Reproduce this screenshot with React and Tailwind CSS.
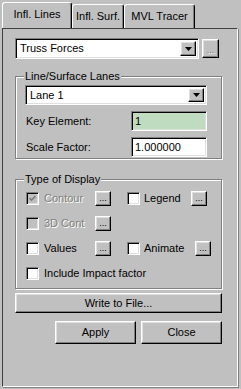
import React from "react";

const raised =
  "border border-t-white border-l-white border-r-black border-b-black shadow-[inset_-1px_-1px_0_#808080,inset_1px_1px_0_#dfdfdf] bg-[#c0c0c0]";
const sunken =
  "border border-t-[#808080] border-l-[#808080] border-r-white border-b-white shadow-[inset_1px_1px_0_#000,inset_-1px_-1px_0_#dfdfdf]";
const etched =
  "border border-[#808080] shadow-[inset_1px_1px_0_#fff,1px_1px_0_#fff]";

function Arrow() {
  return (
    <svg width="7" height="4" viewBox="0 0 7 4">
      <path d="M0 0H7L3.5 4Z" fill="#000" />
    </svg>
  );
}

function Combo({ text, w, h }) {
  return (
    <div className={`${sunken} bg-white flex items-center ${w} ${h} p-[2px]`}>
      <span className="flex-1 pl-[2px] leading-none">{text}</span>
      <div className={`${raised} w-[16px] h-full flex items-center justify-center`}>
        <Arrow />
      </div>
    </div>
  );
}

function Dots({ w = "w-[16px]", h = "h-[15px]", disabled = false }) {
  return (
    <div
      className={`${raised} ${w} ${h} flex items-end justify-center pb-[2px] leading-none text-[9px] ${
        disabled ? "text-[#808080] [text-shadow:1px_1px_0_#fff]" : "text-black"
      }`}
    >
      ...
    </div>
  );
}

function Check({ checked = false, disabled = false }) {
  return (
    <div
      className={`${sunken} w-[13px] h-[13px] shrink-0 flex items-center justify-center ${
        disabled ? "bg-[#c0c0c0]" : "bg-white"
      }`}
    >
      {checked && (
        <svg width="7" height="7" viewBox="0 0 7 7">
          <path d="M0.5 3L2.5 5L6.5 1" stroke={disabled ? "#808080" : "#000"} strokeWidth="1.6" fill="none" />
        </svg>
      )}
    </div>
  );
}

function Tab({ label, active, w }) {
  return (
    <div
      className={`${w} ${
        active ? "h-[26px] relative z-10" : "h-[24px]"
      } border-t border-l border-t-white border-l-white border-r border-r-black shadow-[inset_-1px_0_0_#808080] rounded-t-[3px] flex items-center justify-center bg-[#c0c0c0]`}
    >
      <span className={active ? "pb-[2px]" : ""}>{label}</span>
    </div>
  );
}

export default function App() {
  return (
    <div className="w-[241px] h-[389px] bg-[#c0c0c0] overflow-hidden font-['Liberation_Sans',Arial,sans-serif] text-[11px] text-black">
      <div className="h-[28px] flex items-end pl-[2px]">
        <Tab label="Infl. Lines" active w="w-[70px]" />
        <Tab label="Infl. Surf." w="w-[52px]" />
        <Tab label="MVL Tracer" w="w-[71px]" />
      </div>
      <div className="ml-[2px] w-[236px] h-[359px] border-t border-l border-t-[#404040] border-l-[#404040] border-r border-b border-r-white border-b-white shadow-[inset_1px_1px_0_#c0c0c0,1px_1px_0_#808080] flex flex-col pl-[12px]">
        <div className="mt-[9px] flex items-center">
          <Combo text="Truss Forces" w="w-[184px]" h="h-[21px]" />
          <div className="ml-[3px]">
            <Dots w="w-[17px]" h="h-[19px]" disabled />
          </div>
        </div>

        <fieldset className={`${etched} mt-[11px] w-[207px] p-0 m-0`}>
          <legend className="ml-[8px] px-[1px] bg-[#c0c0c0] leading-[13px]">Line/Surface Lanes</legend>
          <div className="pl-[9px] pb-[1px] flex flex-col">
            <div className="mt-[2px]">
              <Combo text="Lane 1" w="w-[182px]" h="h-[20px]" />
            </div>
            <div className="mt-[6px] w-[182px] flex items-center justify-between">
              <span className="pl-[1px]">Key Element:</span>
              <div className={`${sunken} w-[76px] h-[20px] bg-[#c0dcc0] flex items-center pl-[3px]`}>1</div>
            </div>
            <div className="mt-[6px] w-[182px] flex items-center justify-between">
              <span className="pl-[1px]">Scale Factor:</span>
              <div className={`${sunken} w-[76px] h-[20px] bg-white flex items-center pl-[3px]`}>1.000000</div>
            </div>
          </div>
        </fieldset>

        <fieldset className={`${etched} mt-[14px] w-[207px] p-0 m-0`}>
          <legend className="ml-[8px] px-[1px] bg-[#c0c0c0] leading-[13px]">Type of Display</legend>
          <div className="pl-[10px] pb-[3px] flex flex-col">
            <div className="h-[25px] flex items-center">
              <div className="w-[101px] flex items-center">
                <Check checked disabled />
                <span className="ml-[5px] w-[51px] text-[#808080] [text-shadow:1px_1px_0_#fff]">Contour</span>
                <Dots />
              </div>
              <Check />
              <span className="ml-[4px] w-[47px]">Legend</span>
              <Dots />
            </div>
            <div className="h-[25px] flex items-center">
              <div className="w-[101px] flex items-center">
                <Check disabled />
                <span className="ml-[5px] w-[51px] text-[#808080] [text-shadow:1px_1px_0_#fff]">3D Cont</span>
                <Dots />
              </div>
            </div>
            <div className="h-[25px] flex items-center">
              <div className="w-[101px] flex items-center">
                <Check />
                <span className="ml-[5px] w-[51px]">Values</span>
                <Dots />
              </div>
              <Check />
              <span className="ml-[4px] w-[51px]">Animate</span>
              <Dots />
            </div>
            <div className="h-[24px] flex items-center">
              <Check />
              <span className="ml-[5px]">Include Impact factor</span>
            </div>
          </div>
        </fieldset>

        <div className={`${raised} mt-[4px] w-[207px] h-[20px] flex items-center justify-center`}>
          Write to File...
        </div>

        <div className="mt-[8px] w-[207px] flex justify-end gap-[5px]">
          <div className={`${raised} w-[81px] h-[23px] flex items-center justify-center`}>Apply</div>
          <div className={`${raised} w-[81px] h-[23px] flex items-center justify-center`}>Close</div>
        </div>
      </div>
    </div>
  );
}
